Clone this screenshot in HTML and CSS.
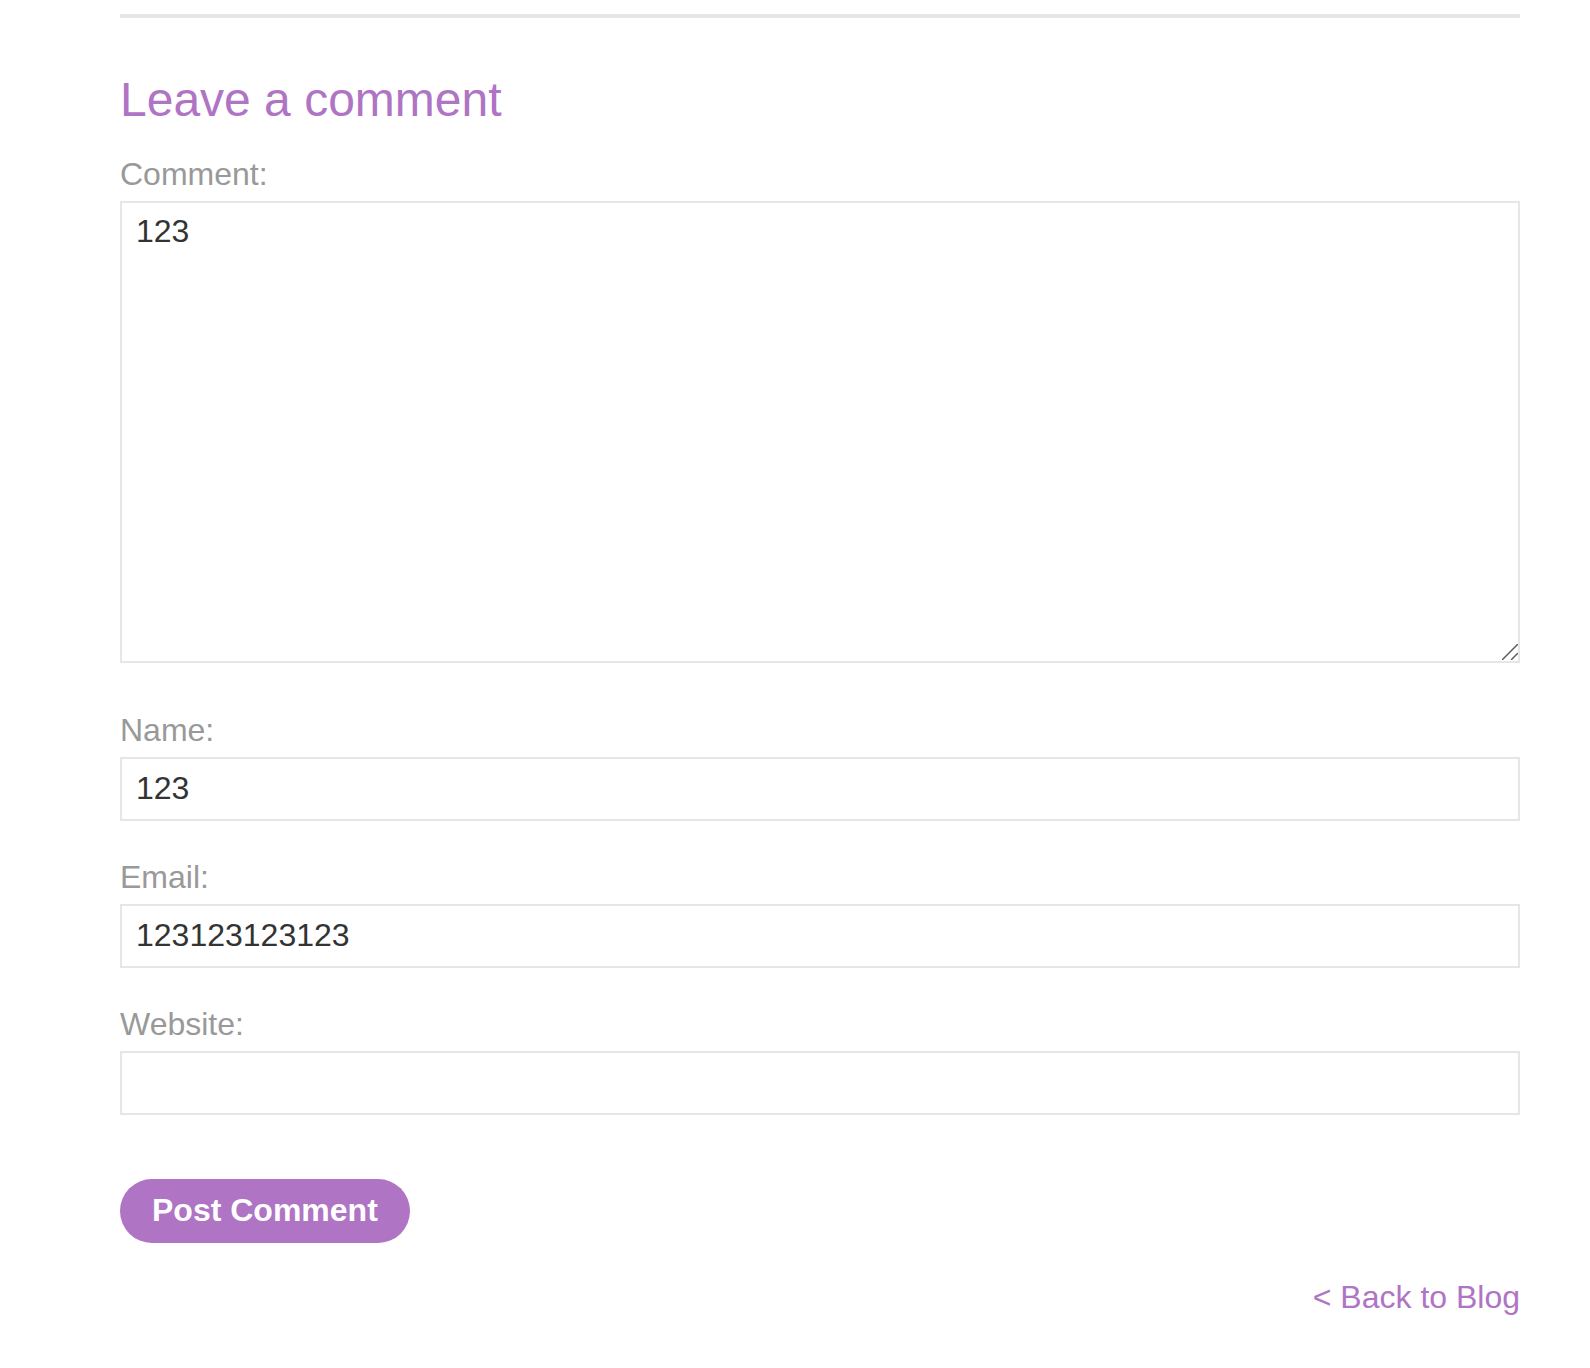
FILE: index.html
```html
<!DOCTYPE html>
<html lang="en">
<head>
<meta charset="utf-8">
<title>Leave a comment</title>
<link rel="stylesheet" href="styles.css">
</head>
<body>
<div class="page">
  <div class="rule"></div>
  <h2 class="title">Leave a comment</h2>
  <form class="comment-form">
    <div class="field field-first">
      <label class="label" for="comment">Comment:</label>
      <div class="area-wrap">
        <textarea class="textarea" id="comment">123</textarea>
        <svg class="grip" width="16" height="16" viewBox="0 0 16 16" aria-hidden="true">
          <line x1="0.5" y1="15.5" x2="15.5" y2="0.5" />
          <line x1="9.5" y1="15.5" x2="15.5" y2="9.5" />
        </svg>
      </div>
    </div>
    <div class="field field-after-area">
      <label class="label" for="name">Name:</label>
      <input class="input" id="name" type="text" value="123">
    </div>
    <div class="field">
      <label class="label" for="email">Email:</label>
      <input class="input" id="email" type="text" value="123123123123">
    </div>
    <div class="field">
      <label class="label" for="website">Website:</label>
      <input class="input" id="website" type="text" value="">
    </div>
    <button class="button" type="button">Post Comment</button>
  </form>
  <div class="back-row">
    <a class="back-link" href="#">&lt; Back to Blog</a>
  </div>
</div>
</body>
</html>
```

FILE: styles.css
```css
html, body {
  margin: 0;
  padding: 0;
  background: #ffffff;
}

body {
  font-family: "Liberation Sans", Arial, Helvetica, sans-serif;
  color: #333333;
}

.page {
  margin-left: 120px;
  width: 1400px;
  padding-top: 14px;
  padding-bottom: 40px;
}

.rule {
  height: 4px;
  background: #e6e6e6;
}

.title {
  margin: 53px 0 0 0;
  font-size: 48px;
  line-height: 57.6px;
  font-weight: normal;
  color: #b074c4;
}

.comment-form {
  display: flex;
  flex-direction: column;
}

.field {
  display: flex;
  flex-direction: column;
  margin-top: 32px;
}

.field-first {
  margin-top: 21px;
}

.field-after-area {
  margin-top: 43px;
}

.label {
  display: block;
  margin-bottom: 3px;
  font-size: 32px;
  line-height: 48px;
  color: #999999;
}

.area-wrap {
  position: relative;
}

.textarea,
.input {
  display: block;
  box-sizing: border-box;
  width: 100%;
  margin: 0;
  border: 2px solid #e6e6e6;
  border-radius: 0;
  background: #ffffff;
  font-family: "Liberation Sans", Arial, Helvetica, sans-serif;
  font-size: 32px;
  color: #333333;
  outline: none;
}

.textarea {
  height: 462px;
  padding: 10px 14px;
  line-height: normal;
  resize: none;
}

.grip {
  position: absolute;
  right: 2px;
  bottom: 3px;
  stroke: #5a5a5a;
  stroke-width: 1.5;
  stroke-linecap: round;
  pointer-events: none;
}

.input {
  height: 64px;
  padding: 0 14px;
}

.button {
  align-self: flex-start;
  margin-top: 64px;
  height: 64px;
  padding: 0 32px;
  border: none;
  border-radius: 32px;
  background: #b074c4;
  color: #ffffff;
  font-family: "Liberation Sans", Arial, Helvetica, sans-serif;
  font-size: 32px;
  font-weight: bold;
  cursor: pointer;
}

.back-row {
  display: flex;
  justify-content: flex-end;
  margin-top: 30px;
}

.back-link {
  font-size: 32px;
  line-height: 48px;
  color: #b074c4;
  text-decoration: none;
}
```
